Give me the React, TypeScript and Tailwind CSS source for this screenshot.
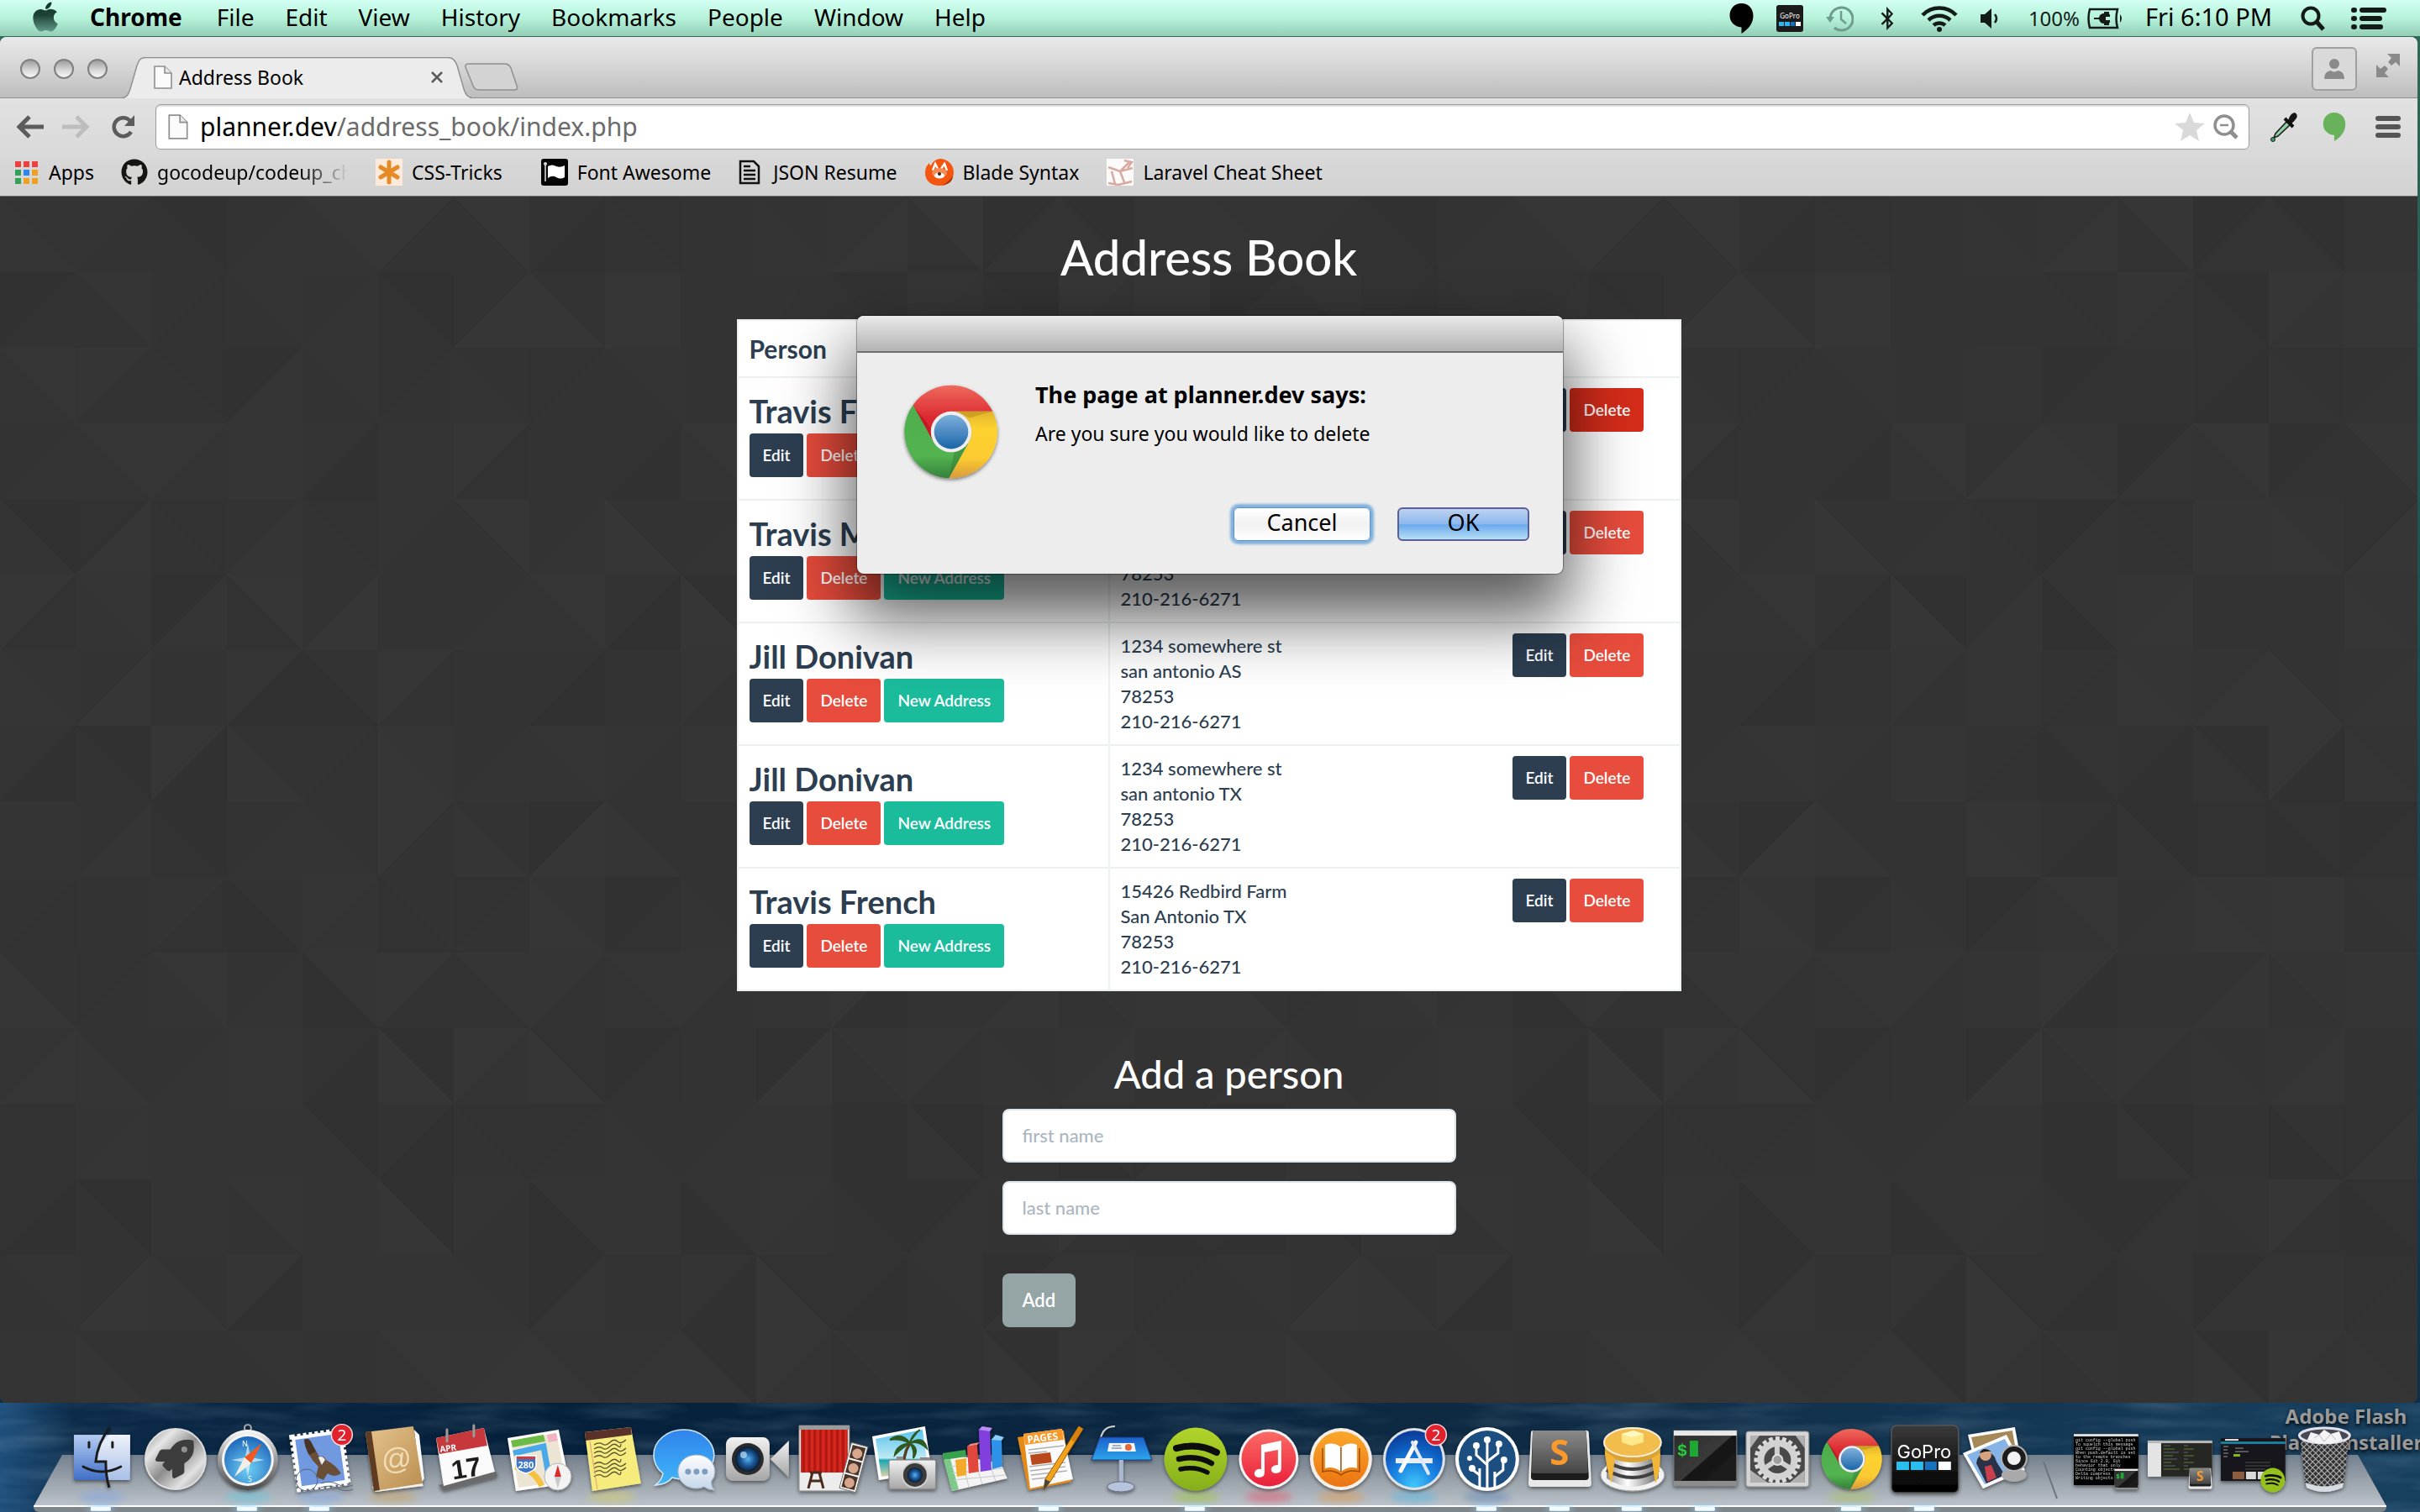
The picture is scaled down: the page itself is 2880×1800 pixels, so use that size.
import React from "react";
import { FaApple, FaBluetoothB, FaGithub, FaRocket, FaSpotify } from "react-icons/fa";

/* ---------- shared paint definitions ---------- */

function PaintDefs() {
  return (
    <svg className="absolute h-0 w-0" aria-hidden="true">
      <defs>
        <linearGradient id="redG" x1="0" y1="0" x2="0" y2="1">
          <stop offset="0" stopColor="#ee6a5c" />
          <stop offset="0.6" stopColor="#dc2630" />
        </linearGradient>
        <linearGradient id="yelG" x1="0" y1="0" x2="0" y2="1">
          <stop offset="0" stopColor="#e0b32c" />
          <stop offset="0.25" stopColor="#fdd22f" />
          <stop offset="0.7" stopColor="#fccb30" />
          <stop offset="1" stopColor="#d99a3c" />
        </linearGradient>
        <linearGradient id="grnG" x1="0" y1="0" x2="0" y2="1">
          <stop offset="0" stopColor="#4fae4e" />
          <stop offset="0.7" stopColor="#52b34f" />
          <stop offset="1" stopColor="#35803a" />
        </linearGradient>
        <linearGradient id="bluG" x1="0" y1="0" x2="0" y2="1">
          <stop offset="0" stopColor="#7fb0dc" />
          <stop offset="1" stopColor="#1a65a8" />
        </linearGradient>
        <linearGradient id="finder" x1="0" y1="0" x2="0" y2="1">
          <stop offset="0" stopColor="#b5cdf3" />
          <stop offset="1" stopColor="#3f6fc6" />
        </linearGradient>
        <linearGradient id="finderR" x1="0" y1="0" x2="0" y2="1">
          <stop offset="0" stopColor="#eef3fb" />
          <stop offset="1" stopColor="#a9bfe6" />
        </linearGradient>
        <linearGradient id="steel" x1="0" y1="0" x2="1" y2="1">
          <stop offset="0" stopColor="#8f8f8f" />
          <stop offset="0.25" stopColor="#e6e6e6" />
          <stop offset="0.5" stopColor="#8c8c8c" />
          <stop offset="0.75" stopColor="#e2e2e2" />
          <stop offset="1" stopColor="#828282" />
        </linearGradient>
        <linearGradient id="rim" x1="0" y1="0" x2="0" y2="1">
          <stop offset="0" stopColor="#fafafa" />
          <stop offset="0.5" stopColor="#9a9a9a" />
          <stop offset="1" stopColor="#4b4b4b" />
        </linearGradient>
        <radialGradient id="sky" cx="0.5" cy="0.7" r="0.7">
          <stop offset="0" stopColor="#6fd0f5" />
          <stop offset="1" stopColor="#1e66ba" />
        </radialGradient>
        <linearGradient id="tan" x1="0" y1="0" x2="1" y2="1">
          <stop offset="0" stopColor="#e6c48d" />
          <stop offset="1" stopColor="#b98d50" />
        </linearGradient>
        <linearGradient id="bubble" x1="0" y1="0" x2="0" y2="1">
          <stop offset="0" stopColor="#2f83ec" />
          <stop offset="1" stopColor="#3fb8f7" />
        </linearGradient>
        <linearGradient id="bubble2" x1="0" y1="0" x2="0" y2="1">
          <stop offset="0" stopColor="#ffffff" />
          <stop offset="1" stopColor="#c3d5ea" />
        </linearGradient>
        <linearGradient id="silver" x1="0" y1="0" x2="0" y2="1">
          <stop offset="0" stopColor="#f2f2f2" />
          <stop offset="1" stopColor="#a5a5a5" />
        </linearGradient>
        <radialGradient id="lens" cx="0.5" cy="0.5" r="0.5">
          <stop offset="0" stopColor="#5fb2ea" />
          <stop offset="0.5" stopColor="#1d5da0" />
          <stop offset="1" stopColor="#0a1c33" />
        </radialGradient>
        <linearGradient id="curtain" x1="0" y1="0" x2="0.06" y2="0" spreadMethod="reflect">
          <stop offset="0" stopColor="#e22d22" />
          <stop offset="1" stopColor="#a81610" />
        </linearGradient>
        <linearGradient id="beach" x1="0" y1="0" x2="0" y2="1">
          <stop offset="0" stopColor="#58c3ee" />
          <stop offset="0.6" stopColor="#bdeaf3" />
          <stop offset="0.65" stopColor="#1ba7b5" />
          <stop offset="1" stopColor="#dcd2a8" />
        </linearGradient>
        <linearGradient id="orange" x1="0" y1="0" x2="0" y2="1">
          <stop offset="0" stopColor="#fba72b" />
          <stop offset="1" stopColor="#ec7411" />
        </linearGradient>
        <linearGradient id="keynote" x1="0" y1="0" x2="0" y2="1">
          <stop offset="0" stopColor="#1d5fc9" />
          <stop offset="1" stopColor="#2ca6ee" />
        </linearGradient>
        <linearGradient id="spot" x1="0" y1="0" x2="0" y2="1">
          <stop offset="0" stopColor="#b2d52b" />
          <stop offset="1" stopColor="#85b01a" />
        </linearGradient>
        <linearGradient id="tunes" x1="0" y1="0" x2="0" y2="1">
          <stop offset="0" stopColor="#fb6a63" />
          <stop offset="1" stopColor="#ea1f3c" />
        </linearGradient>
        <radialGradient id="store" cx="0.5" cy="0.95" r="0.9">
          <stop offset="0" stopColor="#3fc6fb" />
          <stop offset="0.5" stopColor="#157ade" />
          <stop offset="1" stopColor="#0b3f9c" />
        </radialGradient>
        <linearGradient id="subl" x1="0" y1="0" x2="0" y2="1">
          <stop offset="0" stopColor="#8a8a8a" />
          <stop offset="1" stopColor="#454545" />
        </linearGradient>
        <linearGradient id="term" x1="0" y1="0" x2="1" y2="1">
          <stop offset="0" stopColor="#2b2b2b" />
          <stop offset="0.5" stopColor="#3a3a3a" />
          <stop offset="0.52" stopColor="#161616" />
          <stop offset="1" stopColor="#202020" />
        </linearGradient>
        <linearGradient id="gopro" x1="0" y1="0" x2="0" y2="1">
          <stop offset="0" stopColor="#3a3a3a" />
          <stop offset="0.5" stopColor="#1c1c1c" />
          <stop offset="1" stopColor="#000000" />
        </linearGradient>
        <linearGradient id="cake" x1="0" y1="0" x2="1" y2="0">
          <stop offset="0" stopColor="#8f8f8f" />
          <stop offset="0.4" stopColor="#ffffff" />
          <stop offset="1" stopColor="#6d6d6d" />
        </linearGradient>
        <pattern id="mesh" width="5" height="5" patternUnits="userSpaceOnUse" patternTransform="rotate(45)">
          <rect width="5" height="5" fill="#303030" />
          <path d="M0 0H5M0 0V5" stroke="#b4b4b4" strokeWidth="2.2" />
        </pattern>
        <linearGradient id="apple" x1="0" y1="0" x2="0" y2="1">
          <stop offset="0" stopColor="#14352a" />
          <stop offset="0.45" stopColor="#1d4336" />
          <stop offset="1" stopColor="#63998a" />
        </linearGradient>
        <filter id="soft" x="-50%" y="-50%" width="200%" height="200%">
          <feGaussianBlur stdDeviation="4" />
        </filter>
        <filter id="drop" x="-20%" y="-20%" width="140%" height="150%">
          <feDropShadow dx="0" dy="2" stdDeviation="2" floodOpacity="0.5" />
        </filter>
      </defs>
    </svg>
  );
}

/* ---------- small reusable drawings ---------- */

function ChromeMark() {
  return (
    <g>
      <path d="M-47-33A57 57 0 0 1 51-25L0-25A25 25 0 0 0-22 12Z" fill="url(#redG)" />
      <path d="M51-25A57 57 0 0 1-3 57L21 14A25 25 0 0 0 0-25Z" fill="url(#yelG)" />
      <path d="M-3 57A57 57 0 0 1-47-33L-22 12A25 25 0 0 0 21 14Z" fill="url(#grnG)" />
      <path d="M-47-33L-22 12L-26-6Z" fill="#a5161c" opacity="0.5" />
      <path d="M8-25H51L22-17Z" fill="#b98a1c" opacity="0.5" />
      <path d="M-3 57L21 14L4 25Z" fill="#2f7d33" opacity="0.5" />
      <circle r="25" fill="#efefef" />
      <circle r="21" fill="url(#bluG)" />
    </g>
  );
}

function PageIcon({ className }: { className: string }) {
  return (
    <svg viewBox="0 0 22 28" className={className} aria-hidden="true">
      <path d="M1 1H13L21 9V27H1Z" fill="#fbfbfb" stroke="#8f8f8f" strokeWidth="1.6" />
      <path d="M13 1V9H21" fill="#e9e9e9" stroke="#8f8f8f" strokeWidth="1.6" />
    </svg>
  );
}

function Balloon({ className }: { className: string }) {
  return (
    <svg viewBox="0 0 30 38" className={className} aria-hidden="true">
      <path
        d="M15 1C7 1 1 7 1 15.500C1 23 7 29 15 29.500V37C23 32 29 25 29 15.500C29 7 23 1 15 1Z"
        fill="currentColor"
      />
    </svg>
  );
}

/* ---------- menu bar ---------- */

const menus = ["File", "Edit", "View", "History", "Bookmarks", "People", "Window", "Help"];

function MenuBar() {
  return (
    <header className="flex h-11 items-center justify-between border-b border-[#2f6b55] bg-linear-to-b from-[#d2fff3] via-[#b6f3da] to-[#93cdb5] pr-10 pl-[38px] text-[28px] leading-10 text-black">
      <nav className="flex items-center gap-[37px] pb-1">
        <button aria-label="Apple menu" className="flex w-8 justify-center">
          <FaApple className="h-10 w-9" style={{ fill: "url(#apple)" }} />
        </button>
        <button className="pr-1 font-bold">Chrome</button>
        {menus.map((m) => (
          <button key={m}>{m}</button>
        ))}
      </nav>
      <div className="flex items-center gap-[26px] text-[#141a18]">
        <Balloon className="h-[38px] w-[31px] text-black" />
        <svg viewBox="0 0 32 32" className="h-8 w-8" aria-label="GoPro">
          <rect width="32" height="32" rx="3" fill="#1b1b1b" />
          <text x="16" y="16" textAnchor="middle" fontSize="8" fill="#fff" fontFamily="Noto Sans">
            GoPro
          </text>
          <path d="M3 20h6v5H3z" fill="#2ab6ee" />
          <path d="M10 20h6v5h-6z" fill="#2ab6ee" />
          <path d="M17 20h5v5h-5z" fill="#1470c0" />
          <path d="M23 20h6v5h-6z" fill="#fff" />
        </svg>
        <svg viewBox="0 0 34 32" className="h-8 w-[34px]" fill="none" stroke="#6f9c8c" strokeWidth="3" aria-label="Time Machine">
          <path d="M6 17A13.500 13.500 0 1 1 11 27" />
          <path d="M1 14H11L6 21Z" fill="#6f9c8c" stroke="none" />
          <path d="M19 7V17L25 22" strokeWidth="2.500" />
        </svg>
        <FaBluetoothB className="h-7 w-7" />
        <svg viewBox="0 0 44 32" className="h-8 w-11" fill="none" stroke="currentColor" strokeWidth="4.500" aria-label="Wi-Fi">
          <path d="M2 12A28 28 0 0 1 42 12" />
          <path d="M9 18A19 19 0 0 1 35 18" />
          <path d="M15 24A11 11 0 0 1 29 24" />
          <circle cx="22" cy="29" r="3" fill="currentColor" stroke="none" />
        </svg>
        <svg viewBox="0 0 24 26" className="h-[26px] w-6" aria-label="Volume">
          <path d="M1 8H6L14 1V25L6 18H1Z" fill="currentColor" />
          <path d="M18 8Q22 13 18 18" fill="none" stroke="currentColor" strokeWidth="2.500" />
        </svg>
        <div className="flex items-center gap-2 pl-2 text-[24px]">
          <span>100%</span>
          <svg viewBox="0 0 44 26" className="h-[26px] w-11" aria-label="Battery charging">
            <path d="M4 2H37Q34 13 37 24H4Q1 13 4 2Z" fill="none" stroke="currentColor" strokeWidth="2.500" />
            <path d="M40 8Q44 13 40 18Z" fill="currentColor" />
            <path d="M9 12H15Q16 7 21 7V5H27V9H23V17H27V21H21V19Q16 19 15 14H9Z" fill="currentColor" />
            <path d="M22 8H28V11H22zM22 15H28V18H22z" fill="currentColor" />
          </svg>
        </div>
        <span className="pr-2 pb-1 text-[29px] text-black">Fri 6:10 PM</span>
        <svg viewBox="0 0 30 30" className="h-[30px] w-[30px]" fill="none" stroke="currentColor" strokeWidth="4" aria-label="Spotlight">
          <circle cx="12" cy="12" r="9.500" />
          <path d="M19 19L27 28" strokeWidth="5" />
        </svg>
        <svg viewBox="0 0 42 26" className="ml-1 h-[26px] w-[42px]" stroke="currentColor" strokeWidth="6" strokeLinecap="round" aria-label="Notification Center">
          <path d="M3 3H4M13 3H39M3 13H4M13 13H34M3 23H4M13 23H35" />
        </svg>
      </div>
    </header>
  );
}

/* ---------- browser chrome ---------- */

function TabStrip() {
  return (
    <div className="flex h-[73px] items-end border-b border-[#8d8d8d] bg-linear-to-b from-[#e9e9e9] via-[#d5d5d5] to-[#bdbdbd] pr-5 pl-6">
      <div className="flex gap-4 self-start pt-[26px]">
        {["Close", "Minimize", "Zoom"].map((n) => (
          <button
            key={n}
            aria-label={n}
            className="h-6 w-6 rounded-full border-2 border-[#7f7f7f] bg-linear-to-b from-[#9d9d9d] via-[#d0d0d0] to-[#fafafa]"
          />
        ))}
      </div>
      <div className="relative -mb-px ml-[17px] flex h-[49px] w-[418px] items-center pr-9 pb-0.5 pl-[38px]">
        <svg viewBox="0 0 418 49" className="absolute inset-0 h-full w-full" aria-hidden="true">
          <path
            d="M0 49C6 48 8 44 10 38L18 10C20 4 22 .5 28 .5H388C394 .5 397 4 399 10L407 38C409 44 411 48 418 49"
            fill="#ececec"
            stroke="#8d8d8d"
            strokeWidth="1.400"
          />
        </svg>
        <PageIcon className="relative h-7 w-[22px]" />
        <span className="relative ml-2 flex-1 text-[23px] leading-7 text-black">Address Book</span>
        <button aria-label="Close tab" className="relative">
          <svg viewBox="0 0 14 14" className="h-3.5 w-3.5" stroke="#5b5b5b" strokeWidth="2.500">
            <path d="M1 1L13 13M13 1L1 13" />
          </svg>
        </button>
      </div>
      <button aria-label="New tab" className="mb-[7px] -ml-2.5">
        <svg viewBox="0 0 64 34" className="h-[34px] w-16">
          <path
            d="M1 5Q0 1 5 1H47Q53 1 55 6L62 27Q64 32 59 32H17Q12 32 10 27Z"
            fill="#d3d3d3"
            stroke="#8f8f8f"
            strokeWidth="1.500"
          />
        </svg>
      </button>
      <div className="ml-auto flex items-center gap-[22px] self-start pt-3">
        <button
          aria-label="Profile"
          className="flex h-[52px] w-[54px] items-center justify-center rounded-md border-2 border-[#a0a0a0] bg-[#d9d9d9]"
        >
          <svg viewBox="0 0 24 26" className="h-[26px] w-6" fill="#8a8a8a">
            <circle cx="12" cy="7" r="6" />
            <path d="M0 25Q0 16 8 15Q12 18 16 15Q24 16 24 25Z" />
          </svg>
        </button>
        <button aria-label="Full screen">
          <svg viewBox="0 0 30 30" className="mb-2 h-[30px] w-[30px]" fill="#8a8a8a">
            <path d="M14 1H29V16L24 11L19 15L15 11L19 6Z" />
            <path d="M1 14V29H16L11 24L15 19L11 15L6 19Z" />
          </svg>
        </button>
      </div>
    </div>
  );
}

function Toolbar() {
  return (
    <div className="flex h-[68px] items-center pr-5 pl-[19px]">
      <div className="flex w-[166px] items-center gap-5">
        <button aria-label="Back">
          <svg viewBox="0 0 34 28" className="h-7 w-[34px]" fill="none" stroke="#5c5c5c" strokeWidth="5">
            <path d="M33 14H5M16 2L4 14L16 26" />
          </svg>
        </button>
        <button aria-label="Forward">
          <svg viewBox="0 0 34 28" className="h-7 w-[34px]" fill="none" stroke="#bdbdbd" strokeWidth="5">
            <path d="M1 14H29M18 2L30 14L18 26" />
          </svg>
        </button>
        <button aria-label="Reload" className="ml-1.5">
          <svg viewBox="0 0 28 28" className="h-7 w-7" fill="none" stroke="#5c5c5c" strokeWidth="4.500">
            <path d="M23 20A11 11 0 1 1 22 7" />
            <path d="M27 0V13H15Z" fill="#5c5c5c" stroke="none" />
          </svg>
        </button>
      </div>
      <div className="flex h-[54px] flex-1 items-center rounded-md border border-[#9c9c9c] bg-white pr-3 pl-3.5 shadow-[inset_0_2px_1px_#dcdcdc]">
        <PageIcon className="h-[30px] w-6" />
        <label className="ml-3.5 flex flex-1 items-center text-[30px] leading-10 text-[#6b6b6b]">
          <span className="text-black">planner.dev</span>
          <input aria-label="Address path" defaultValue="/address_book/index.php" className="flex-1 bg-transparent outline-none" />
        </label>
        <button aria-label="Bookmark this page">
          <svg viewBox="0 0 36 34" className="h-[34px] w-9" fill="#d9d9d9">
            <path d="M18 0L23 12L36 13L26 21L29 34L18 27L7 34L10 21L0 13L13 12Z" />
          </svg>
        </button>
        <button aria-label="Zoom level" className="ml-2.5">
          <svg viewBox="0 0 30 30" className="h-[30px] w-[30px]" fill="none" stroke="#8f8f8f" strokeWidth="3.500">
            <circle cx="13" cy="13" r="11" />
            <path d="M8 13H18" strokeWidth="2.500" />
            <path d="M21 21L28 28" strokeWidth="5" />
          </svg>
        </button>
      </div>
      <div className="flex items-center pl-6">
        <button aria-label="Color picker">
          <svg viewBox="0 0 34 36" className="h-9 w-[34px]">
            <path d="M22 10L26 14L10 29L5 31L7 26Z" fill="#8fd0a5" stroke="#222" strokeWidth="1.600" />
            <path d="M18 8L28 18" stroke="#111" strokeWidth="4" />
            <path d="M22 11Q24 2 30 1Q35 4 31 9Q28 13 26 14Z" fill="#161616" />
            <circle cx="4" cy="33" r="2.500" fill="#3f9b62" stroke="#222" />
          </svg>
        </button>
        <Balloon className="ml-7 h-9 w-[30px] text-[#69b25c]" />
        <button aria-label="Menu" className="ml-[34px]">
          <svg viewBox="0 0 30 28" className="h-7 w-[30px]" stroke="#555" strokeWidth="6" strokeLinecap="round">
            <path d="M3 4H27M3 14H27M3 24H27" />
          </svg>
        </button>
      </div>
    </div>
  );
}

function Bookmark({ icon, label, faded }: { icon: React.ReactNode; label: string; faded?: boolean }) {
  return (
    <a href="#" className="flex items-center gap-[11px]">
      {icon}
      {faded ? (
        <span className="w-[228px] overflow-hidden whitespace-nowrap [mask-image:linear-gradient(to_right,black_75%,transparent)]">
          {label}
        </span>
      ) : (
        <span className="whitespace-nowrap">{label}</span>
      )}
    </a>
  );
}

const appDots = ["#ee3e3e", "#ee3e3e", "#ee3e3e", "#33a05a", "#2b86ee", "#f0a020", "#33a05a", "#f0a020", "#f0a020"];

function BookmarksBar() {
  return (
    <nav className="flex h-12 items-start pt-0.5 pl-[18px] text-[23px] leading-9 text-black">
      <div className="flex gap-8">
        <Bookmark
          label="Apps"
          icon={
            <svg viewBox="0 0 27 27" className="mr-0.5 h-[27px] w-[27px]" aria-hidden="true">
              {appDots.map((c, i) => (
                <rect key={i} x={(i % 3) * 10} y={Math.floor(i / 3) * 10} width="7" height="7" fill={c} />
              ))}
            </svg>
          }
        />
        <Bookmark faded label="gocodeup/codeup_challenges" icon={<FaGithub className="h-8 w-8 text-[#151513]" />} />
        <Bookmark
          label="CSS-Tricks"
          icon={
            <svg viewBox="0 0 32 32" className="h-8 w-8" aria-hidden="true">
              <rect width="32" height="32" fill="#fdeadb" />
              <path d="M16 4V28M6 10L26 22M26 10L6 22" stroke="#e58a25" strokeWidth="5" strokeLinecap="round" />
            </svg>
          }
        />
      </div>
      <div className="ml-[46px] flex gap-[33px]">
        <Bookmark
          label="Font Awesome"
          icon={
            <svg viewBox="0 0 32 32" className="h-8 w-8" aria-hidden="true">
              <rect width="32" height="32" rx="3" fill="#050505" />
              <path d="M5 6V27" stroke="#aaa" strokeWidth="2" />
              <circle cx="5" cy="6" r="2" fill="#ddd" />
              <path d="M8 9Q13 6 18 9Q23 11 28 8V22Q23 25 18 22Q13 19 8 23Z" fill="#fff" />
            </svg>
          }
        />
        <Bookmark
          label="JSON Resume"
          icon={
            <svg viewBox="0 0 26 30" className="mr-1 h-[30px] w-[26px]" fill="none" stroke="#111" strokeWidth="2.500" aria-hidden="true">
              <path d="M2 2H18L24 8V28H2Z" />
              <path d="M6 8H14M6 13H20M6 18H20M6 23H20" />
            </svg>
          }
        />
        <Bookmark
          label="Blade Syntax"
          icon={
            <svg viewBox="0 0 34 32" className="h-8 w-[34px]" aria-hidden="true">
              <path d="M17 0C27 0 34 7 34 16S27 32 17 32C7 32 0 26 0 17Q0 9 5 5Q5 8 7 8Q10 1 17 0Z" fill="#f4560f" />
              <path d="M9 14L12 6L15 12M19 12L23 6L26 14" fill="none" stroke="#fff" strokeWidth="2.500" />
              <ellipse cx="17" cy="17" rx="9" ry="6" fill="#f58b50" />
              <ellipse cx="17" cy="20" rx="6" ry="3.500" fill="#fff" />
              <circle cx="17" cy="18" r="2" fill="#4a1a08" />
              <path d="M20 32Q28 28 33 20Q33 28 24 31Z" fill="#a83204" />
            </svg>
          }
        />
        <Bookmark
          label="Laravel Cheat Sheet"
          icon={
            <svg viewBox="0 0 32 32" className="h-8 w-8" aria-hidden="true">
              <rect width="32" height="32" fill="#fdfbfa" />
              <path d="M2 10L16 15L31 11M6 15L10 30M16 15L21 28M21 2L30 4L25 11M2 29L14 31L30 27M16 15L28 3" fill="none" stroke="#d9a8a1" strokeWidth="2.500" />
            </svg>
          }
        />
      </div>
    </nav>
  );
}

/* ---------- page ---------- */

const shades = ["#313131", "#323232", "#333333", "#343434", "#343434", "#353535", "#363636", "#333333"];

let state = 20150417;
function nextShade() {
  state = (state * 1103515245 + 12345) % 2147483648;
  return shades[Math.floor(state / 65536) % shades.length];
}

const tiles = Array.from({ length: 512 }, (_, k) => {
  const cell = Math.floor(k / 2);
  const c = cell % 16;
  const r = Math.floor(cell / 16);
  const x = c * 90;
  const y = r * 90;
  const down = (c + r) % 2 === 0;
  const first = k % 2 === 0;
  const points = down
    ? first
      ? `${x},${y} ${x + 90},${y} ${x + 90},${y + 90}`
      : `${x},${y} ${x},${y + 90} ${x + 90},${y + 90}`
    : first
      ? `${x},${y} ${x + 90},${y} ${x},${y + 90}`
      : `${x + 90},${y} ${x + 90},${y + 90} ${x},${y + 90}`;
  return { points, fill: nextShade() };
});

function Backdrop() {
  return (
    <svg className="absolute inset-0 h-full w-full" aria-hidden="true">
      <defs>
        <pattern id="tri" width="1440" height="1440" patternUnits="userSpaceOnUse">
          <rect width="1440" height="1440" fill="#343434" />
          {tiles.map((t, i) => (
            <polygon key={i} points={t.points} fill={t.fill} />
          ))}
        </pattern>
      </defs>
      <rect width="100%" height="100%" fill="url(#tri)" />
    </svg>
  );
}

function SmallButton({ tone, children }: { tone: string; children: string }) {
  return (
    <button className={`rounded-sm px-4 py-[11px] text-[19px] leading-[30px] font-semibold text-white ${tone}`}>{children}</button>
  );
}

const navy = "bg-[#2c3e50]";
const red = "bg-[#e74c3c]";
const redPressed = "bg-[#d62c1a]";
const teal = "bg-[#1abc9c]";

const people = [
  { name: "Travis French", lines: ["15426 Redbird Farm", "San Antonio TX", "78253", "210-216-6271"], pressed: true },
  { name: "Travis M", lines: ["1234 somewhere st", "san antonio TX", "78253", "210-216-6271"] },
  { name: "Jill Donivan", lines: ["1234 somewhere st", "san antonio AS", "78253", "210-216-6271"] },
  { name: "Jill Donivan", lines: ["1234 somewhere st", "san antonio TX", "78253", "210-216-6271"] },
  { name: "Travis French", lines: ["15426 Redbird Farm", "San Antonio TX", "78253", "210-216-6271"] },
];

function PeopleTable() {
  return (
    <table className="mx-auto mt-[42px] w-[1124px] table-fixed border-collapse border-2 border-[#ecf0f1] bg-white text-[22px] leading-[30px] font-medium text-[#2c3e50]">
      <colgroup>
        <col className="w-[442px]" />
        <col />
        <col className="w-[218px]" />
      </colgroup>
      <thead>
        <tr>
          <th className="px-[13px] py-3 text-left text-[30px] leading-[42px]">Person</th>
          <th colSpan={2} />
        </tr>
      </thead>
      <tbody>
        {people.map((p, i) => (
          <tr key={i} className="border-t-2 border-[#ecf0f1] align-top">
            <td className="px-[13px] py-3">
              <h4 className="text-[38px] leading-[54px] font-bold">{p.name}</h4>
              <div className="flex gap-1">
                <SmallButton tone={navy}>Edit</SmallButton>
                <SmallButton tone={red}>Delete</SmallButton>
                <SmallButton tone={teal}>New Address</SmallButton>
              </div>
            </td>
            <td className="border-l-2 border-[#ecf0f1] px-[13px] py-3">
              {p.lines.map((l) => (
                <div key={l}>{l}</div>
              ))}
            </td>
            <td className="px-[18px] py-3">
              <div className="flex gap-1">
                <SmallButton tone={navy}>Edit</SmallButton>
                <SmallButton tone={p.pressed ? redPressed : red}>Delete</SmallButton>
              </div>
            </td>
          </tr>
        ))}
      </tbody>
    </table>
  );
}

function Page() {
  const field =
    "h-16 w-full rounded-lg border-2 border-[#dce4ec] bg-white px-[22px] pb-0.5 text-[22px] font-medium text-[#2c3e50] placeholder:text-[#acb6c0] outline-none";
  return (
    <main className="relative flex-1 overflow-hidden rounded-b-lg bg-[#343434] font-[Lato,sans-serif]">
      <Backdrop />
      <div className="relative pt-10">
        <h1 className="text-center text-[58px] leading-[64px] font-medium text-white">Address Book</h1>
        <PeopleTable />
        <form className="mt-[70px] pl-12" onSubmit={(e) => e.preventDefault()}>
          <div className="mx-auto flex w-[540px] flex-col">
            <h2 className="text-center text-[47px] leading-[56px] font-medium text-white">Add a person</h2>
            <input aria-label="first name" placeholder="first name" className={`mt-3.5 ${field}`} />
            <input aria-label="last name" placeholder="last name" className={`mt-[22px] ${field}`} />
            <button className="mt-[46px] h-16 self-start rounded-lg bg-[#95a5a6] px-6 pb-0.5 text-[22px] font-semibold text-white">Add</button>
          </div>
        </form>
      </div>
    </main>
  );
}

function ConfirmDialog() {
  return (
    <div
      role="alertdialog"
      aria-label="The page at planner.dev says"
      className="absolute top-[376px] left-1/2 w-[840px] -translate-x-1/2 overflow-hidden rounded-lg bg-[#ededed] text-black shadow-[0_0_1px_1px_rgba(0,0,0,0.35),0_44px_80px_8px_rgba(0,0,0,0.65)]"
    >
      <div className="h-11 border-b-2 border-[#6f6d6f] bg-linear-to-b from-[#ebebeb] to-[#b3b3b3]" />
      <div className="flex pt-8 pr-10 pl-[52px]">
        <svg viewBox="-62 -60 124 124" className="mt-1 h-[120px] w-[120px]" aria-label="Chrome">
          <g filter="url(#drop)">
            <ChromeMark />
          </g>
        </svg>
        <div className="pl-10">
          <h2 className="text-[27px] leading-9 font-bold whitespace-nowrap">The page at planner.dev says:</h2>
          <p className="mt-3 text-[23px] leading-8">Are you sure you would like to delete</p>
        </div>
      </div>
      <div className="mt-7 mb-[39px] flex justify-end gap-8 pr-10 text-[27px] leading-8">
        <button className="h-10 w-[163px] rounded-md border border-[#5d93c9] bg-linear-to-b from-white via-[#f1f1f1] to-white pb-1 shadow-[0_0_3px_4px_#7fb0de]">
          Cancel
        </button>
        <button className="h-10 w-[157px] rounded-md border-2 border-[#5b5f93] bg-[linear-gradient(#bcd1f0,#8cb8ee_50%,#69a9ec_52%,#b7e0f6)] pb-1">
          OK
        </button>
      </div>
    </div>
  );
}

/* ---------- dock ---------- */

function Badge() {
  return (
    <g>
      <circle cx="69" cy="18" r="12.500" fill="#e0232e" stroke="#f6d9da" strokeWidth="1.500" />
      <text x="69" y="25" textAnchor="middle" fontSize="19" fill="#fff" fontFamily="Noto Sans">
        2
      </text>
    </g>
  );
}

function SublimeArt() {
  return (
    <g>
      <path d="M8 16Q8 13 11 13H74Q77 13 77 16L80 76Q80 80 76 80H9Q5 80 5 76Z" fill="#e9e9e9" />
      <path d="M10 16Q10 13 13 13H71Q74 13 74 16L77 68Q77 72 73 72H12Q8 72 8 68Z" fill="#1e1e1e" />
      <path d="M10 16Q10 13 13 13H71Q74 13 74 16L76 61Q76 64 73 64H12Q8 64 9 61Z" fill="url(#subl)" />
      <text x="42" y="54" textAnchor="middle" fontSize="42" fontWeight="bold" fill="#fb9a2b" fontFamily="Noto Sans">
        S
      </text>
    </g>
  );
}

function TerminalArt() {
  return (
    <g>
      <rect x="5" y="13" width="75" height="66" fill="url(#term)" stroke="#777" />
      <rect x="5" y="13" width="75" height="6" fill="#e8e8e8" />
      <rect x="5" y="73" width="75" height="6" fill="#8d8d8d" />
      <text x="9" y="43" fontSize="20" fontWeight="bold" fill="#27cf3c" fontFamily="Liberation Mono">
        $
      </text>
      <rect x="24" y="25" width="10" height="19" fill="#1faa30" />
    </g>
  );
}

type DockApp = { name: string; glow?: string; running?: boolean; art: React.ReactNode };

const scribbles = [28, 33, 38, 43, 51, 56, 61, 66];

const gearTeeth = Array.from({ length: 20 }, (_, i) => i * 18);

const apps: DockApp[] = [
  {
    name: "Finder",
    glow: "#7ea4e6",
    running: true,
    art: (
      <g>
        <rect x="10" y="18" width="67" height="54" fill="url(#finder)" />
        <path d="M52 18H77V72H51Q48 62 48 50H36Q38 30 52 18Z" fill="url(#finderR)" />
        <path d="M53 9Q38 28 36 50H48Q48 68 52 81" fill="none" stroke="#1a1a1a" strokeWidth="3" />
        <path d="M21 56Q43 68 66 56" fill="none" stroke="#1a1a1a" strokeWidth="3" strokeLinecap="round" />
        <path d="M28 27V33M56 27V33" stroke="#1a1a1a" strokeWidth="3" strokeLinecap="round" />
      </g>
    ),
  },
  {
    name: "Launchpad",
    art: (
      <g>
        <circle cx="44" cy="47" r="36" fill="url(#steel)" stroke="#ddd" strokeWidth="2" />
        <FaRocket x={20} y={24} size={46} color="#3c3c3c" />
      </g>
    ),
  },
  {
    name: "Safari",
    glow: "#5fc6e0",
    running: true,
    art: (
      <g>
        <circle cx="43" cy="10" r="4" fill="none" stroke="#aaa" strokeWidth="2" />
        <circle cx="43" cy="48" r="36" fill="url(#rim)" />
        <circle cx="43" cy="48" r="31" fill="#f4f4f4" />
        <circle cx="43" cy="48" r="28" fill="url(#sky)" />
        <path d="M43 28L46 45L63 48L46 51L43 68L40 51L23 48L40 45Z" fill="#fff" opacity="0.6" />
        <path d="M60 28L39 45L47 52Z" fill="#ee5a23" />
        <path d="M27 68L39 45L47 52Z" fill="#f4efe6" />
        <text x="36" y="32" fontSize="9" fill="#fff" fontFamily="Noto Sans">
          N
        </text>
        <text x="43" y="74" fontSize="9" fill="#fff" fontFamily="Noto Sans">
          S
        </text>
      </g>
    ),
  },
  {
    name: "Mail",
    glow: "#7ea4e6",
    running: true,
    art: (
      <g>
        <g transform="rotate(-8 43 48)">
          <rect x="13" y="16" width="60" height="64" fill="#fff" stroke="#fff" strokeWidth="5" strokeDasharray="4 3" />
          <rect x="17" y="20" width="52" height="56" fill="#6f99df" />
        </g>
        <path d="M24 24Q30 20 34 30L42 44Q48 42 50 48Q62 54 68 64Q60 70 52 64L47 72L38 68L41 56Q26 42 24 24Z" fill="#6b4f38" />
        <path d="M24 24Q30 20 34 30L38 38L30 42Q25 34 24 24Z" fill="#4a3626" />
        <path d="M41 45Q46 42 49 48L45 54Z" fill="#eee" />
        <circle cx="27" cy="72" r="13" fill="none" stroke="#56657a" strokeWidth="1" />
        <path d="M44 76Q54 72 64 77T82 78M44 81Q54 77 64 82T82 83" fill="none" stroke="#56657a" />
        <Badge />
      </g>
    ),
  },
  {
    name: "Contacts",
    glow: "#cda25a",
    art: (
      <g>
        <path d="M18 80L77 74L79 79L22 86Z" fill="#efefef" />
        <path d="M68 12L74 18L80 70L76 76Z" fill="#fafafa" />
        <path d="M10 15L67 8L78 76L20 85Z" fill="url(#tan)" />
        <path d="M10 15L17 14L27 84L20 85Z" fill="#5e3a20" />
        <text x="47" y="59" textAnchor="middle" fontSize="36" fill="#f1dbb4" fontFamily="Liberation Sans" transform="rotate(-6 46 46)">
          @
        </text>
      </g>
    ),
  },
  {
    name: "Calendar",
    art: (
      <g>
        <path d="M10 78L79 62L80 68L16 85Z" fill="#6b6b6b" />
        <path d="M7 22L64 10L77 62L16 79Z" fill="#fbfbfb" />
        <path d="M7 22L64 10L68 31L11 41Z" fill="#c6383b" />
        <path d="M20 12V26M52 7V20" stroke="#9a9a9a" strokeWidth="3" strokeLinecap="round" />
        <text x="12" y="39" fontSize="10" fontWeight="bold" fill="#fff" fontFamily="Noto Sans" transform="rotate(-8 12 39)">
          APR
        </text>
        <text x="43" y="69" textAnchor="middle" fontSize="32" fontWeight="bold" fill="#1c1c1c" fontFamily="Liberation Sans" transform="rotate(-9 43 58)">
          17
        </text>
      </g>
    ),
  },
  {
    name: "Maps",
    art: (
      <g>
        <path d="M5 22L66 12L79 76L15 85Z" fill="#fff" />
        <path d="M9 25L63 16L75 73L18 81Z" fill="#ece5d3" />
        <path d="M9 25L48 18L50 26L11 33Z" fill="#6dbb46" />
        <path d="M52 18L63 16L65 25L54 27Z" fill="#f0b3bf" />
        <path d="M12 40L48 32L54 66" fill="none" stroke="#4aa8e8" strokeWidth="7" />
        <path d="M14 56Q36 58 46 79" fill="none" stroke="#f4c13f" strokeWidth="7" />
        <path d="M15 43H39V54Q39 61 27 64Q15 61 15 54Z" fill="#3b76c9" stroke="#fff" strokeWidth="1.500" />
        <path d="M16 44H38V47H16Z" fill="#d43a3a" />
        <text x="27" y="58" textAnchor="middle" fontSize="11" fontWeight="bold" fill="#fff" fontFamily="Noto Sans">
          280
        </text>
        <circle cx="65" cy="68" r="16" fill="#f3f3f3" stroke="#b5b5b5" />
        <path d="M65 54L69 68H61Z" fill="#da2a2a" />
        <path d="M65 82L69 68H61Z" fill="#c9c9c9" />
      </g>
    ),
  },
  {
    name: "Notes",
    glow: "#d9cf62",
    art: (
      <g>
        <path d="M11 15L66 9L78 76L20 85Z" fill="#f6ec7e" />
        <path d="M11 15L66 9L67 18L12 25Z" fill="#5a322a" />
        {scribbles.map((y, i) => (
          <path key={y} d={`M22 ${y + 2}q6 -4 10 -1t9 -2t9 -1t${i % 3 === 1 ? 4 : 10} -2`} fill="none" stroke="#5a5433" strokeWidth="1.300" />
        ))}
        <path d="M17 26L26 83" stroke="#e49a7a" strokeWidth="1" />
      </g>
    ),
  },
  {
    name: "Messages",
    art: (
      <g>
        <path d="M42 12C22 12 6 25 6 42C6 53 12 60 17 64Q16 72 8 78Q22 77 28 69Q35 71 42 71C62 71 78 58 78 42S62 12 42 12Z" fill="url(#bubble)" stroke="#cfe8fd" strokeWidth="1.500" />
        <path d="M57 42C44 42 35 51 35 62S44 82 57 82Q62 82 66 80Q71 84 79 84Q74 80 75 73Q79 69 79 62C79 51 70 42 57 42Z" fill="url(#bubble2)" stroke="#9fb2c8" />
        <circle cx="47" cy="62" r="3.500" fill="#7e9dbf" />
        <circle cx="57" cy="62" r="3.500" fill="#7e9dbf" />
        <circle cx="67" cy="62" r="3.500" fill="#7e9dbf" />
      </g>
    ),
  },
  {
    name: "FaceTime",
    art: (
      <g>
        <rect x="5" y="21" width="52" height="52" rx="8" fill="url(#silver)" />
        <circle cx="31" cy="47" r="19" fill="#2a2a2a" />
        <circle cx="31" cy="47" r="15" fill="url(#lens)" />
        <circle cx="26" cy="42" r="4" fill="#bfe2fa" opacity="0.7" />
        <path d="M58 47L80 25V69Z" fill="url(#silver)" />
      </g>
    ),
  },
  {
    name: "Photo Booth",
    art: (
      <g>
        <path d="M5 7H65V85H5Z" fill="#ededed" stroke="#8a8a8a" />
        <rect x="7" y="11" width="56" height="52" fill="url(#curtain)" />
        <path d="M5 7H65V12H5Z" fill="#9b9b9b" />
        <path d="M18 63H32M21 63L16 82M29 63L34 82M18 73H32" stroke="#4b2b1c" strokeWidth="3" />
        <g transform="rotate(15 70 57)">
          <rect x="60" y="29" width="20" height="56" fill="#fff" stroke="#777" />
          <rect x="62" y="31" width="16" height="16" fill="#49342c" />
          <rect x="62" y="49" width="16" height="16" fill="#49342c" />
          <rect x="62" y="67" width="16" height="16" fill="#49342c" />
          <circle cx="70" cy="40" r="6" fill="#d8a68c" />
          <circle cx="70" cy="58" r="6" fill="#d8a68c" />
          <circle cx="70" cy="76" r="6" fill="#d8a68c" />
        </g>
      </g>
    ),
  },
  {
    name: "iPhoto",
    art: (
      <g>
        <path d="M5 20L68 8L76 62L13 72Z" fill="#fff" />
        <path d="M9 23L65 12L72 60L16 68Z" fill="url(#beach)" />
        <path d="M44 62Q40 44 50 28" fill="none" stroke="#5a3d20" strokeWidth="3.500" />
        <path d="M50 28Q40 14 26 24Q38 22 50 28Q34 30 32 42Q42 32 50 28Q56 36 54 46Q62 34 50 28Q60 24 70 34Q66 18 50 28Q52 18 62 12" fill="#2f5a23" stroke="#2f5a23" strokeWidth="2" />
        <rect x="25" y="48" width="56" height="35" rx="2" fill="url(#silver)" stroke="#777" />
        <path d="M34 44H42V48H34zM62 45H74V48H62z" fill="#8a8a8a" />
        <circle cx="56" cy="66" r="15" fill="#3a3a3a" stroke="#cfcfcf" strokeWidth="2" />
        <circle cx="56" cy="66" r="9" fill="url(#lens)" />
      </g>
    ),
  },
  {
    name: "Numbers",
    art: (
      <g>
        <path d="M3 40L72 52L80 70L14 85Z" fill="#f3f3f3" />
        <path d="M3 40L30 36L31 44L4 48Z" fill="#37a24c" />
        <path d="M4 48L12 47L22 83L14 85Z" fill="#7cc98a" />
        <path d="M12 56L74 50M14 64L76 58M16 72L78 66M26 48L34 80M42 50L50 77M58 50L66 73" stroke="#c9c9c9" />
        <path d="M18 48L31 46V66L20 68Z" fill="#f3a92b" />
        <path d="M32 32L44 30L46 62L34 64Z" fill="#e0463c" />
        <path d="M32 32L36 29L47 27L44 30Z" fill="#f58a80" />
        <path d="M46 12L59 9L61 60L48 62Z" fill="#8140de" />
        <path d="M46 12L50 8L62 10L59 14Z" fill="#b98df5" />
        <path d="M61 24L73 21L74 56L62 59Z" fill="#2f92e8" />
        <path d="M61 24L66 18L76 21L73 25Z" fill="#8ccbfa" />
      </g>
    ),
  },
  {
    name: "Pages",
    running: true,
    art: (
      <g>
        <path d="M5 21L60 13L69 74L18 84Z" fill="#e68a18" />
        <path d="M12 17L58 11L71 71L20 82Z" fill="#fbfbfb" />
        <path d="M12 17L58 11L60 24L14 30Z" fill="#f8992a" />
        <text x="17" y="28" fontSize="12" fontWeight="bold" fill="#fff" fontFamily="Noto Sans" transform="rotate(-7 17 28)">
          PAGES
        </text>
        <path d="M18 36L60 31M18 40L40 38M19 56L62 51M20 61L62 56M21 66L64 61M22 71L50 68" stroke="#b0b0b0" strokeWidth="1.500" />
        <path d="M20 42L44 39L46 51L22 54Z" fill="#b94a1a" />
        <path d="M78 8L83 11L44 74L36 84L38 71Z" fill="#f2a21c" stroke="#9a5d08" />
        <path d="M38 71L44 74L36 84Z" fill="#444" />
        <path d="M78 8L83 11L73 27L68 24Z" fill="#d9810d" />
      </g>
    ),
  },
  {
    name: "Keynote",
    art: (
      <g>
        <path d="M17 22Q20 8 34 8" fill="none" stroke="#cfd3da" strokeWidth="2" />
        <path d="M16 21H68L78 48H6Z" fill="url(#keynote)" stroke="#1b3f86" />
        <path d="M27 28H57L59 38H25Z" fill="#f3f7fb" />
        <circle cx="50" cy="33" r="4" fill="#e5683a" />
        <path d="M31 31H41M30 34H42" stroke="#8b99aa" strokeWidth="1.500" />
        <path d="M39 48H44V78H39Z" fill="#aab7cf" />
        <ellipse cx="41" cy="80" rx="16" ry="6" fill="#b8c3dc" stroke="#66728c" />
      </g>
    ),
  },
  {
    name: "Spotify",
    glow: "#9cc832",
    running: true,
    art: (
      <g>
        <circle cx="43" cy="47" r="37.500" fill="url(#spot)" />
        <g fill="none" stroke="#0b0b0b" strokeLinecap="round">
          <path d="M20 34Q46 27 68 39" strokeWidth="8" />
          <path d="M23 47Q44 42 62 52" strokeWidth="6.500" />
          <path d="M25 59Q43 55 57 63" strokeWidth="5.500" />
        </g>
      </g>
    ),
  },
  {
    name: "iTunes",
    glow: "#e8526a",
    art: (
      <g>
        <circle cx="43" cy="47" r="35.500" fill="#f4f4f4" />
        <circle cx="43" cy="47" r="32.500" fill="url(#tunes)" />
        <path d="M34 30L58 25V58Q58 64 51 64Q45 63 46 58Q48 54 54 54V36L38 39V63Q38 69 31 69Q25 68 26 63Q28 58 34 59Z" fill="#fff" />
      </g>
    ),
  },
  {
    name: "iBooks",
    glow: "#e59a4a",
    art: (
      <g>
        <circle cx="43" cy="47" r="37" fill="#f6f0e8" />
        <circle cx="43" cy="47" r="33" fill="url(#orange)" />
        <path d="M43 33Q34 26 24 30V58Q34 55 43 62Q52 55 62 58V30Q52 26 43 33Z" fill="#fff" />
        <path d="M43 33V62M21 34V62Q34 59 43 66Q52 59 65 62V34" fill="none" stroke="#9c4c0c" strokeWidth="1.500" />
      </g>
    ),
  },
  {
    name: "App Store",
    glow: "#4fb8e6",
    art: (
      <g>
        <circle cx="43" cy="47" r="37" fill="#dfe3e8" />
        <circle cx="43" cy="47" r="34" fill="url(#store)" />
        <path d="M21 46H65V52H21Z" fill="#e9eef5" />
        <g strokeLinecap="round">
          <path d="M45 27L27 61" stroke="#fff" strokeWidth="5" />
          <path d="M41 27L60 64" stroke="#dfe8f3" strokeWidth="4" />
        </g>
        <Badge />
      </g>
    ),
  },
  {
    name: "SourceTree",
    glow: "#5b86b8",
    running: true,
    art: (
      <g>
        <circle cx="43" cy="47" r="38" fill="#fff" />
        <circle cx="43" cy="47" r="34" fill="#1f4f80" />
        <g fill="none" stroke="#fff" strokeWidth="3">
          <path d="M43 24V82M34 81V58M52 81V62" />
          <path d="M43 54L30 42V32M43 50L56 40V31M34 66L26 60M52 68L62 60V50" />
        </g>
        <g fill="#fff">
          <circle cx="43" cy="24" r="4" />
          <circle cx="30" cy="31" r="4" />
          <circle cx="57" cy="29" r="4" />
          <circle cx="25" cy="58" r="4" />
          <circle cx="63" cy="48" r="4" />
          <circle cx="22" cy="46" r="3" />
        </g>
      </g>
    ),
  },
  { name: "Sublime Text", running: true, art: <SublimeArt /> },
  {
    name: "Sequel Pro",
    running: true,
    art: (
      <g>
        <ellipse cx="43" cy="66" rx="38" ry="19" fill="#f2f2f2" stroke="#a5a5a5" />
        <path d="M12 44V70Q43 90 74 70V44Z" fill="url(#cake)" />
        <path d="M12 50Q43 68 74 50M12 60Q43 78 74 60" fill="none" stroke="#3f3f3f" strokeWidth="4" />
        <path d="M10 28V42Q43 60 76 42V28Z" fill="#d9a436" />
        <path d="M10 38Q12 60 18 76L22 46ZM66 46L70 76Q76 66 76 40Z" fill="#f2b535" />
        <ellipse cx="43" cy="27" rx="34" ry="17" fill="#f3bd4d" stroke="#f6efe0" strokeWidth="2" />
        <path d="M30 17L44 13L56 17V27L42 31L30 27Z" fill="#ffe98a" />
        <path d="M30 17L42 21L56 17L44 13Z" fill="#fff7c4" />
      </g>
    ),
  },
  { name: "Terminal", running: true, art: <TerminalArt /> },
  {
    name: "System Preferences",
    art: (
      <g>
        <rect x="4" y="14" width="75" height="66" rx="3" fill="#d5d5d5" stroke="#8c8c8c" />
        <rect x="9" y="19" width="65" height="56" fill="#4a4a4a" />
        <path d="M9 60L30 75H9zM74 60L56 75H74zM9 34L20 19H9zM74 34L63 19H74z" fill="#b0b0b0" />
        {gearTeeth.map((a) => (
          <rect key={a} x="39" y="20" width="5" height="10" fill="#dcdcdc" transform={`rotate(${a} 41.500 48)`} />
        ))}
        <circle cx="41.500" cy="48" r="20" fill="none" stroke="#d2d2d2" strokeWidth="8" />
        <path d="M41 48L41 30M41 48L26 58M41 48L57 58" stroke="#cfcfcf" strokeWidth="6" />
        <circle cx="41.500" cy="48" r="6" fill="#9f9f9f" stroke="#e3e3e3" strokeWidth="2" />
      </g>
    ),
  },
  {
    name: "Chrome",
    glow: "#a9c45a",
    running: true,
    art: (
      <g transform="translate(43 47) scale(0.63)">
        <ChromeMark />
      </g>
    ),
  },
  {
    name: "GoPro",
    running: true,
    art: (
      <g>
        <rect x="3" y="7" width="80" height="80" rx="6" fill="url(#gopro)" stroke="#555" strokeWidth="1.500" />
        <text x="42" y="46" textAnchor="middle" fontSize="22" fill="#fff" fontFamily="Inter">
          GoPro
        </text>
        <path d="M9 50h15v10H9zM26 50h15v10H26z" fill="#29bdf0" />
        <path d="M43 50h14v10H43z" fill="#1472bf" />
        <path d="M59 50h15v10H59z" fill="#fff" />
      </g>
    ),
  },
  {
    name: "Preview",
    art: (
      <g>
        <path d="M8 18L64 9L73 58L20 66Z" fill="#fff" />
        <path d="M12 21L61 13L68 52L22 60Z" fill="#a58a58" />
        <path d="M2 40L54 18L76 60L26 82Z" fill="#fff" />
        <path d="M7 42L52 23L71 58L28 77Z" fill="#86b4e6" />
        <path d="M18 52Q20 40 30 38Q40 40 42 50L52 66L30 76Z" fill="#2b3347" />
        <circle cx="29" cy="42" r="7" fill="#d9a27f" />
        <path d="M22 40Q26 31 36 38Q30 37 22 40Z" fill="#1d1714" />
        <path d="M28 56L36 54L42 69L31 74Z" fill="#c8414b" />
        <ellipse cx="63" cy="66" rx="15" ry="8" fill="#a9a9a9" />
        <circle cx="63" cy="46" r="15" fill="#1d1d1d" stroke="#b0b0b0" strokeWidth="2" />
        <circle cx="63" cy="46" r="8" fill="#f2f2f2" />
      </g>
    ),
  },
];

const shellLines = [
  "git config --global push",
  "To squelch this message",
  "git config --global push",
  "When push.default is set",
  "to the remote branches",
  "Since Git 2.0, Git",
  "behavior that only",
  "Counting objects",
  "Delta compress",
  "Writing objects",
];

const codeRows = [31, 35, 39, 43, 47, 51, 55, 59];

const minimized: DockApp[] = [
  {
    name: "Terminal window",
    art: (
      <g>
        <rect x="4" y="17" width="77" height="61" fill="#050505" />
        <rect x="4" y="17" width="77" height="3" fill="#dedede" />
        <g fontSize="5" fill="#cfcfcf" fontFamily="Liberation Mono">
          {shellLines.map((l, i) => (
            <text key={i} x="6" y={26 + i * 5}>
              {l}
            </text>
          ))}
        </g>
        <g transform="translate(51 54) scale(0.37)">
          <TerminalArt />
        </g>
      </g>
    ),
  },
  {
    name: "Sublime window",
    art: (
      <g>
        <rect x="5" y="25" width="77" height="43" fill="#272822" stroke="#666" strokeWidth="0.500" />
        <rect x="5" y="25" width="16" height="43" fill="#e4e4e4" />
        <rect x="5" y="25" width="77" height="3" fill="#b7b7b7" />
        {codeRows.map((y, i) => (
          <path key={y} d={`M24 ${y}h${8 + ((i * 5) % 12)}M48 ${y}h${5 + ((i * 7) % 14)}`} stroke={i % 2 ? "#5f7a34" : "#5a6670"} strokeWidth="1" />
        ))}
        <g transform="translate(52 53) scale(0.37)">
          <SublimeArt />
        </g>
      </g>
    ),
  },
  {
    name: "Spotify window",
    art: (
      <g>
        <rect x="5" y="22" width="77" height="51" fill="#16181b" />
        <rect x="5" y="26" width="77" height="3" fill="#1a7f9c" />
        <rect x="10" y="23" width="16" height="2" fill="#e8e8e8" />
        <path d="M8 32h6M8 36h5M8 40h6M8 44h5M22 34h10M22 38h16" stroke="#9a9a9a" />
        <rect x="20" y="41" width="8" height="3" fill="#84b81a" />
        <path d="M34 51h30M34 55h30M34 59h24" stroke="#4a4a4a" />
        <path d="M19 62h14v9H19z" fill="#8c5b3e" />
        <path d="M35 62h12v9H35zM49 62h10v9H49z" fill="#d8d8d8" />
        <circle cx="67" cy="72" r="14" fill="#0b0b0b" />
        <FaSpotify x={52} y={57} size={30} color="#95c11f" />
      </g>
    ),
  },
  {
    name: "Trash",
    art: (
      <g>
        <path d="M13 18L20 80Q42 90 65 80L72 18Z" fill="url(#mesh)" />
        <path d="M20 75L21 81Q42 91 64 81L65 75Q42 84 20 75Z" fill="#d9dbe4" />
        <ellipse cx="42.500" cy="19" rx="30" ry="9" fill="#4a4a55" stroke="#e1e2ee" strokeWidth="3" />
        <path d="M22 24L26 15L36 18L42 12L50 17L60 14L64 24Q43 34 22 24Z" fill="#f4f4f4" />
        <path d="M30 22L36 18L42 26L50 17L56 24" fill="none" stroke="#b9b9b9" />
      </g>
    ),
  },
];

function DockItem({ app }: { app: DockApp }) {
  return (
    <button aria-label={app.name} className="min-w-0 flex-1">
      <svg viewBox="0 0 87 110" className="h-[110px] w-full overflow-visible" aria-hidden="true">
        {app.glow ? <ellipse cx="43" cy="92" rx="28" ry="7" fill={app.glow} opacity="0.5" filter="url(#soft)" /> : null}
        <g filter="url(#drop)">{app.art}</g>
        {app.running ? (
          <g>
            <ellipse cx="42" cy="106" rx="16" ry="3" fill="#8fd4ff" filter="url(#soft)" />
            <rect x="30" y="104" width="24" height="5" rx="1" fill="#f3fbff" />
          </g>
        ) : null}
      </svg>
    </button>
  );
}

function Dock() {
  return (
    <footer className="relative h-[130px] overflow-hidden">
      <svg className="absolute inset-0 h-full w-full" aria-hidden="true">
        <defs>
          <linearGradient id="sea" x1="0" y1="0" x2="1" y2="0">
            <stop offset="0" stopColor="#1d4f7d" />
            <stop offset="0.03" stopColor="#0c2b49" />
            <stop offset="0.2" stopColor="#05203b" />
            <stop offset="0.6" stopColor="#0e2942" />
            <stop offset="1" stopColor="#17405f" />
          </linearGradient>
          <filter id="waves" x="0" y="0" width="100%" height="100%">
            <feTurbulence type="fractalNoise" baseFrequency="0.008 0.05" numOctaves="3" seed="4" />
            <feColorMatrix values="0 0 0 0 0.45  0 0 0 0 0.6  0 0 0 0 0.75  0 1.800 0 0 -0.750" />
          </filter>
        </defs>
        <rect width="100%" height="100%" fill="url(#sea)" />
        <rect width="100%" height="100%" filter="url(#waves)" opacity="0.2" />
      </svg>
      <p className="absolute top-0 right-[-30px] w-[236px] text-center text-[24px] leading-[31px] font-bold whitespace-nowrap text-[#9a9a9a] [text-shadow:0_2px_4px_#000]">
        Adobe Flash
        <br />
        Player Installer
      </p>
      <div className="absolute inset-x-10 top-[62px] h-[61px] bg-linear-to-b from-[#7d8894]/90 via-[#9aa2aa] to-[#bcc3ca] [clip-path:polygon(34px_0,calc(100%-34px)_0,100%_100%,0_100%)]" />
      <div className="absolute inset-x-10 bottom-0 h-2 rounded-b-md border-t-2 border-white bg-[#7f868b]" />
      <div className="relative flex pt-5 pr-[69px] pl-[78px]">
        {apps.map((a) => (
          <DockItem key={a.name} app={a} />
        ))}
        <svg viewBox="0 0 43 110" className="h-[110px] w-[43px]" aria-hidden="true">
          <path d="M11 50L27 94" stroke="#6c757e" strokeWidth="2" />
        </svg>
        {minimized.map((a) => (
          <DockItem key={a.name} app={a} />
        ))}
      </div>
    </footer>
  );
}

export default function App() {
  return (
    <div className="relative flex min-h-screen flex-col overflow-hidden bg-linear-to-b from-[#2e6b55] to-[#0c2b49] font-['Noto_Sans',sans-serif]">
      <PaintDefs />
      <MenuBar />
      <div className="mr-[3px] flex flex-1 flex-col">
        <div className="overflow-hidden rounded-t-lg border-b border-[#6e6e6e] bg-linear-to-b from-[#ececec] to-[#d2d2d2]">
          <TabStrip />
          <Toolbar />
          <BookmarksBar />
        </div>
        <Page />
      </div>
      <ConfirmDialog />
      <Dock />
    </div>
  );
}
